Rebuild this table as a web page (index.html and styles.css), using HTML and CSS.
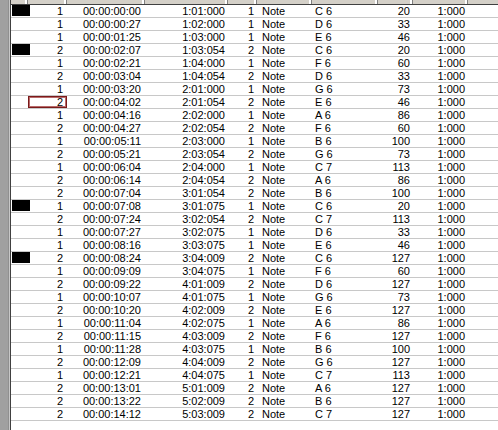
FILE: index.html
```html
<!DOCTYPE html>
<html>
<head>
<meta charset="utf-8">
<link rel="stylesheet" href="styles.css">
</head>
<body>
<div class="frame">
  <div class="gutter"></div>
  <div class="list">
    <div class="head">
      <span></span><span></span><span></span><span></span><span></span><span></span><span></span><span></span><span></span><span></span>
    </div>
    <div class="rows" id="rows">
      <div class="row"><div class="c0"><i class="mark"></i></div><div class="c1">1</div><div class="c2">00:00:00:00</div><div class="c3">1:01:000</div><div class="c4">1</div><div class="c5">Note</div><div class="c6">C 6</div><div class="c7">20</div><div class="c8">1:000</div><div class="c9"></div></div>
      <div class="row"><div class="c0"></div><div class="c1">1</div><div class="c2">00:00:00:27</div><div class="c3">1:02:000</div><div class="c4">1</div><div class="c5">Note</div><div class="c6">D 6</div><div class="c7">33</div><div class="c8">1:000</div><div class="c9"></div></div>
      <div class="row"><div class="c0"></div><div class="c1">1</div><div class="c2">00:00:01:25</div><div class="c3">1:03:000</div><div class="c4">1</div><div class="c5">Note</div><div class="c6">E 6</div><div class="c7">46</div><div class="c8">1:000</div><div class="c9"></div></div>
      <div class="row"><div class="c0"><i class="mark"></i></div><div class="c1">2</div><div class="c2">00:00:02:07</div><div class="c3">1:03:054</div><div class="c4">2</div><div class="c5">Note</div><div class="c6">C 6</div><div class="c7">20</div><div class="c8">1:000</div><div class="c9"></div></div>
      <div class="row"><div class="c0"></div><div class="c1">1</div><div class="c2">00:00:02:21</div><div class="c3">1:04:000</div><div class="c4">1</div><div class="c5">Note</div><div class="c6">F 6</div><div class="c7">60</div><div class="c8">1:000</div><div class="c9"></div></div>
      <div class="row"><div class="c0"></div><div class="c1">2</div><div class="c2">00:00:03:04</div><div class="c3">1:04:054</div><div class="c4">2</div><div class="c5">Note</div><div class="c6">D 6</div><div class="c7">33</div><div class="c8">1:000</div><div class="c9"></div></div>
      <div class="row"><div class="c0"></div><div class="c1">1</div><div class="c2">00:00:03:20</div><div class="c3">2:01:000</div><div class="c4">1</div><div class="c5">Note</div><div class="c6">G 6</div><div class="c7">73</div><div class="c8">1:000</div><div class="c9"></div></div>
      <div class="row"><div class="c0"></div><div class="c1 focus">2</div><div class="c2">00:00:04:02</div><div class="c3">2:01:054</div><div class="c4">2</div><div class="c5">Note</div><div class="c6">E 6</div><div class="c7">46</div><div class="c8">1:000</div><div class="c9"></div></div>
      <div class="row"><div class="c0"></div><div class="c1">1</div><div class="c2">00:00:04:16</div><div class="c3">2:02:000</div><div class="c4">1</div><div class="c5">Note</div><div class="c6">A 6</div><div class="c7">86</div><div class="c8">1:000</div><div class="c9"></div></div>
      <div class="row"><div class="c0"></div><div class="c1">2</div><div class="c2">00:00:04:27</div><div class="c3">2:02:054</div><div class="c4">2</div><div class="c5">Note</div><div class="c6">F 6</div><div class="c7">60</div><div class="c8">1:000</div><div class="c9"></div></div>
      <div class="row"><div class="c0"></div><div class="c1">1</div><div class="c2">00:00:05:11</div><div class="c3">2:03:000</div><div class="c4">1</div><div class="c5">Note</div><div class="c6">B 6</div><div class="c7">100</div><div class="c8">1:000</div><div class="c9"></div></div>
      <div class="row"><div class="c0"></div><div class="c1">2</div><div class="c2">00:00:05:21</div><div class="c3">2:03:054</div><div class="c4">2</div><div class="c5">Note</div><div class="c6">G 6</div><div class="c7">73</div><div class="c8">1:000</div><div class="c9"></div></div>
      <div class="row"><div class="c0"></div><div class="c1">1</div><div class="c2">00:00:06:04</div><div class="c3">2:04:000</div><div class="c4">1</div><div class="c5">Note</div><div class="c6">C 7</div><div class="c7">113</div><div class="c8">1:000</div><div class="c9"></div></div>
      <div class="row"><div class="c0"></div><div class="c1">2</div><div class="c2">00:00:06:14</div><div class="c3">2:04:054</div><div class="c4">2</div><div class="c5">Note</div><div class="c6">A 6</div><div class="c7">86</div><div class="c8">1:000</div><div class="c9"></div></div>
      <div class="row"><div class="c0"></div><div class="c1">2</div><div class="c2">00:00:07:04</div><div class="c3">3:01:054</div><div class="c4">2</div><div class="c5">Note</div><div class="c6">B 6</div><div class="c7">100</div><div class="c8">1:000</div><div class="c9"></div></div>
      <div class="row"><div class="c0"><i class="mark"></i></div><div class="c1">1</div><div class="c2">00:00:07:08</div><div class="c3">3:01:075</div><div class="c4">1</div><div class="c5">Note</div><div class="c6">C 6</div><div class="c7">20</div><div class="c8">1:000</div><div class="c9"></div></div>
      <div class="row"><div class="c0"></div><div class="c1">2</div><div class="c2">00:00:07:24</div><div class="c3">3:02:054</div><div class="c4">2</div><div class="c5">Note</div><div class="c6">C 7</div><div class="c7">113</div><div class="c8">1:000</div><div class="c9"></div></div>
      <div class="row"><div class="c0"></div><div class="c1">1</div><div class="c2">00:00:07:27</div><div class="c3">3:02:075</div><div class="c4">1</div><div class="c5">Note</div><div class="c6">D 6</div><div class="c7">33</div><div class="c8">1:000</div><div class="c9"></div></div>
      <div class="row"><div class="c0"></div><div class="c1">1</div><div class="c2">00:00:08:16</div><div class="c3">3:03:075</div><div class="c4">1</div><div class="c5">Note</div><div class="c6">E 6</div><div class="c7">46</div><div class="c8">1:000</div><div class="c9"></div></div>
      <div class="row"><div class="c0"><i class="mark"></i></div><div class="c1">2</div><div class="c2">00:00:08:24</div><div class="c3">3:04:009</div><div class="c4">2</div><div class="c5">Note</div><div class="c6">C 6</div><div class="c7">127</div><div class="c8">1:000</div><div class="c9"></div></div>
      <div class="row"><div class="c0"></div><div class="c1">1</div><div class="c2">00:00:09:09</div><div class="c3">3:04:075</div><div class="c4">1</div><div class="c5">Note</div><div class="c6">F 6</div><div class="c7">60</div><div class="c8">1:000</div><div class="c9"></div></div>
      <div class="row"><div class="c0"></div><div class="c1">2</div><div class="c2">00:00:09:22</div><div class="c3">4:01:009</div><div class="c4">2</div><div class="c5">Note</div><div class="c6">D 6</div><div class="c7">127</div><div class="c8">1:000</div><div class="c9"></div></div>
      <div class="row"><div class="c0"></div><div class="c1">1</div><div class="c2">00:00:10:07</div><div class="c3">4:01:075</div><div class="c4">1</div><div class="c5">Note</div><div class="c6">G 6</div><div class="c7">73</div><div class="c8">1:000</div><div class="c9"></div></div>
      <div class="row"><div class="c0"></div><div class="c1">2</div><div class="c2">00:00:10:20</div><div class="c3">4:02:009</div><div class="c4">2</div><div class="c5">Note</div><div class="c6">E 6</div><div class="c7">127</div><div class="c8">1:000</div><div class="c9"></div></div>
      <div class="row"><div class="c0"></div><div class="c1">1</div><div class="c2">00:00:11:04</div><div class="c3">4:02:075</div><div class="c4">1</div><div class="c5">Note</div><div class="c6">A 6</div><div class="c7">86</div><div class="c8">1:000</div><div class="c9"></div></div>
      <div class="row"><div class="c0"></div><div class="c1">2</div><div class="c2">00:00:11:15</div><div class="c3">4:03:009</div><div class="c4">2</div><div class="c5">Note</div><div class="c6">F 6</div><div class="c7">127</div><div class="c8">1:000</div><div class="c9"></div></div>
      <div class="row"><div class="c0"></div><div class="c1">1</div><div class="c2">00:00:11:28</div><div class="c3">4:03:075</div><div class="c4">1</div><div class="c5">Note</div><div class="c6">B 6</div><div class="c7">100</div><div class="c8">1:000</div><div class="c9"></div></div>
      <div class="row"><div class="c0"></div><div class="c1">2</div><div class="c2">00:00:12:09</div><div class="c3">4:04:009</div><div class="c4">2</div><div class="c5">Note</div><div class="c6">G 6</div><div class="c7">127</div><div class="c8">1:000</div><div class="c9"></div></div>
      <div class="row"><div class="c0"></div><div class="c1">1</div><div class="c2">00:00:12:21</div><div class="c3">4:04:075</div><div class="c4">1</div><div class="c5">Note</div><div class="c6">C 7</div><div class="c7">113</div><div class="c8">1:000</div><div class="c9"></div></div>
      <div class="row"><div class="c0"></div><div class="c1">2</div><div class="c2">00:00:13:01</div><div class="c3">5:01:009</div><div class="c4">2</div><div class="c5">Note</div><div class="c6">A 6</div><div class="c7">127</div><div class="c8">1:000</div><div class="c9"></div></div>
      <div class="row"><div class="c0"></div><div class="c1">2</div><div class="c2">00:00:13:22</div><div class="c3">5:02:009</div><div class="c4">2</div><div class="c5">Note</div><div class="c6">B 6</div><div class="c7">127</div><div class="c8">1:000</div><div class="c9"></div></div>
      <div class="row"><div class="c0"></div><div class="c1">2</div><div class="c2">00:00:14:12</div><div class="c3">5:03:009</div><div class="c4">2</div><div class="c5">Note</div><div class="c6">C 7</div><div class="c7">127</div><div class="c8">1:000</div><div class="c9"></div></div>
    </div>
  </div>
</div>
</body>
</html>
```

FILE: styles.css
```css
html, body {
  margin: 0;
  padding: 0;
  background: #ffffff;
}
body {
  width: 498px;
  height: 430px;
  overflow: hidden;
  font-family: "Liberation Sans", Arial, sans-serif;
  font-size: 11px;
  color: #000000;
}
.frame {
  display: flex;
  width: 498px;
  height: 430px;
}
.gutter {
  width: 9px;
  flex: none;
  background: #a0a0a0;
  border-right: 1px solid #c8c8c8;
  box-shadow: inset -1px 0 0 #909090;
}
.list {
  flex: 1;
  display: flex;
  flex-direction: column;
  border-left: 1px solid #404040;
  min-width: 0;
}
.head,
.row {
  display: grid;
  grid-template-columns: 17px 39px 78px 83px 29px 55px 66px 35px 55px 1fr;
}
.head {
  height: 4px;
  background: #d4d0c8;
  border-bottom: 1px solid #404040;
}
.head span {
  border-right: 1px solid #808080;
  box-shadow: inset -2px 0 0 #ffffff;
}
.head span:last-child {
  border-right: none;
  box-shadow: none;
}
.row {
  height: 12px;
  line-height: 12px;
  border-bottom: 1px solid #c8c8c8;
  white-space: nowrap;
}
.row > div {
  overflow: hidden;
}
.row > .c0 {
  overflow: visible;
  position: relative;
}
.c1, .c2, .c3, .c4, .c7, .c8 {
  text-align: right;
  padding-right: 4px;
}
.c3, .c4, .c7, .c8 {
  padding-right: 3px;
}
.c5 {
  padding-left: 5px;
}
.c6 {
  padding-left: 3px;
}
.mark {
  display: block;
  width: 18px;
  height: 11px;
  margin-left: 1px;
  background: #000000;
}
.row > .focus {
  box-shadow: inset 0 0 0 1px #7a1a1a, inset 0 0 0 2px #b86a6a;
}
```
